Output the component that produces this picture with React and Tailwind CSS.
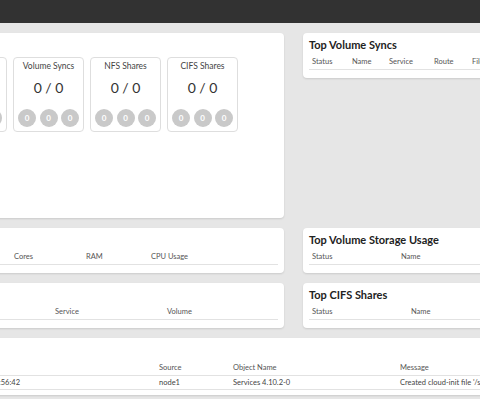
import React from "react";

const font = { fontFamily: "Lato, 'Open Sans', sans-serif" };

function Circle() {
  return (
    <div className="w-[18px] h-[18px] rounded-full bg-[#c9c9c9] flex items-center justify-center text-white text-[8px] font-bold leading-none">
      0
    </div>
  );
}

function Card({ title }) {
  return (
    <div className="w-[71px] h-[75px] shrink-0 border border-[#dedede] rounded-[4px] flex flex-col items-center">
      <div className="mt-[2px] h-[13px] leading-[13px] text-[8.5px] text-[#444]">{title}</div>
      <div className="mt-[7px] h-[16px] leading-[16px] text-[14px] text-[#333]">0 / 0</div>
      <div className="mt-[13px] flex gap-[3.5px]">
        <Circle />
        <Circle />
        <Circle />
      </div>
    </div>
  );
}

function TablePanel({ title, cols, className = "" }) {
  return (
    <div className={"bg-white rounded-[4px] shadow-[0_1px_2px_rgba(0,0,0,0.12)] pt-[5px] px-[6px] pb-[8px] " + className}>
      <div className="h-[14px] leading-[14px] text-[11px] font-bold text-[#222] whitespace-nowrap">{title}</div>
      <div className="mt-[2px] h-[16px] flex items-center border-b border-[#e2e2e2] text-[7.5px] text-[#555] whitespace-nowrap">
        {cols.map((c, i) => (
          <div key={i} className="pl-[3px] shrink-0" style={{ width: c.w }}>
            {c.t}
          </div>
        ))}
      </div>
    </div>
  );
}

export default function App() {
  return (
    <div className="w-[480px] h-[399px] overflow-hidden bg-[#e6e6e6]" style={font}>
      <div className="h-[23px] bg-[#323232]" />
      <div className="ml-[-140px] w-[703px] pt-[10px] flex flex-col gap-[10px]">
        <div className="flex gap-[19px] items-start">
          <div className="w-[424px] h-[185px] bg-white rounded-[4px] shadow-[0_1px_2px_rgba(0,0,0,0.12)] pl-[76px] pt-[24px]">
            <div className="flex gap-[6px]">
              <Card title="Volumes" />
              <Card title="Volume Syncs" />
              <Card title="NFS Shares" />
              <Card title="CIFS Shares" />
            </div>
          </div>
          <TablePanel
            className="w-[260px]"
            title="Top Volume Syncs"
            cols={[
              { t: "Status", w: 40 },
              { t: "Name", w: 37 },
              { t: "Service", w: 45 },
              { t: "Route", w: 38 },
              { t: "File", w: 60 },
            ]}
          />
        </div>
        <div className="flex gap-[19px] items-start">
          <TablePanel
            className="w-[424px]"
            title="Top Nodes"
            cols={[
              { t: "Name", w: 145 },
              { t: "Cores", w: 72 },
              { t: "RAM", w: 65 },
              { t: "CPU Usage", w: 100 },
            ]}
          />
          <TablePanel
            className="w-[260px]"
            title="Top Volume Storage Usage"
            cols={[
              { t: "Status", w: 89 },
              { t: "Name", w: 100 },
            ]}
          />
        </div>
        <div className="flex gap-[19px] items-start">
          <TablePanel
            className="w-[424px]"
            title="Top NFS Shares"
            cols={[
              { t: "Name", w: 186 },
              { t: "Service", w: 112 },
              { t: "Volume", w: 100 },
            ]}
          />
          <TablePanel
            className="w-[260px]"
            title="Top CIFS Shares"
            cols={[
              { t: "Status", w: 99 },
              { t: "Name", w: 100 },
            ]}
          />
        </div>
        <div className="bg-white rounded-[4px] shadow-[0_1px_2px_rgba(0,0,0,0.12)] pt-[5px] px-[6px] pb-[5px]">
          <div className="h-[14px] leading-[14px] text-[11px] font-bold text-[#222]">Recent Events</div>
          <div className="mt-[3px] h-[16px] flex items-center border-b border-[#e2e2e2] text-[7.5px] text-[#555] whitespace-nowrap">
            <div className="w-[290px] shrink-0 pl-[3px]">Time</div>
            <div className="w-[74px] shrink-0 pl-[3px]">Source</div>
            <div className="w-[167px] shrink-0 pl-[3px]">Object Name</div>
            <div className="w-[150px] shrink-0 pl-[3px]">Message</div>
          </div>
          <div className="h-[14px] flex items-center border-b border-[#e2e2e2] text-[7.5px] text-[#444] whitespace-nowrap">
            <div className="w-[290px] shrink-0 pl-[3px]">
              <div className="w-[151px] text-right">2024-11-20 10:56:42</div>
            </div>
            <div className="w-[74px] shrink-0 pl-[3px]">node1</div>
            <div className="w-[167px] shrink-0 pl-[3px]">Services 4.10.2-0</div>
            <div className="w-[150px] shrink-0 pl-[3px]">Created cloud-init file '/services/cloud-init'</div>
          </div>
        </div>
      </div>
    </div>
  );
}
